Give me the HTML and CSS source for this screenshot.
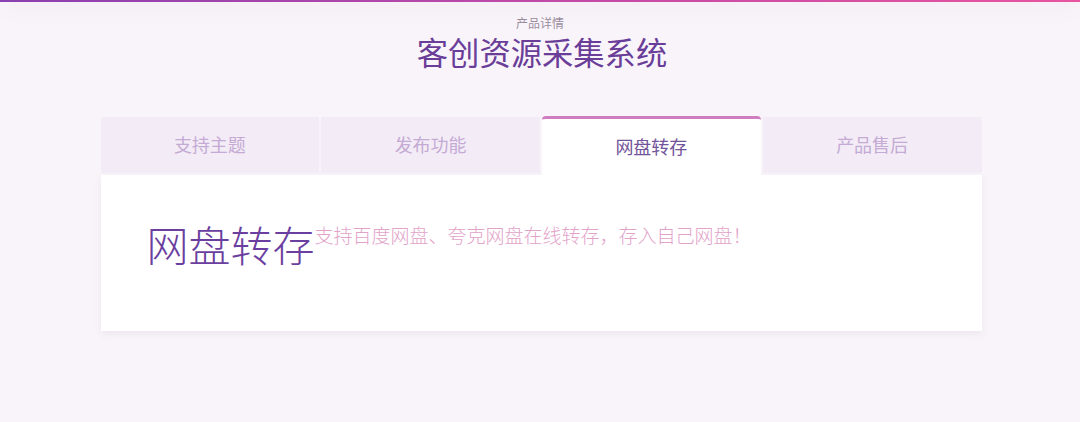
FILE: index.html
```html
<!DOCTYPE html>
<html lang="zh-CN">
<head>
<meta charset="utf-8">
<title>产品详情</title>
<link rel="stylesheet" href="styles.css">
</head>
<body>
<div class="topbar"></div>
<section class="detail">
  <div class="section-head">
    <div class="sub">产品详情</div>
    <h1 class="title">客创资源采集系统</h1>
  </div>
  <div class="tabs-wrap">
    <div class="tabs">
      <div class="tab">支持主题</div>
      <div class="tab">发布功能</div>
      <div class="tab active">网盘转存</div>
      <div class="tab">产品售后</div>
    </div>
    <div class="panel">
      <h2 class="panel-title">网盘转存</h2>
      <p class="panel-desc">支持百度网盘、夸克网盘在线转存，存入自己网盘！</p>
    </div>
  </div>
</section>
</body>
</html>
```

FILE: styles.css
```css
html, body {
  margin: 0;
  padding: 0;
}
body {
  background: #f9f4fa;
  font-family: "Noto Sans CJK SC", "Noto Sans", sans-serif;
  height: 422px;
  overflow: hidden;
}
.topbar {
  height: 2px;
  background: linear-gradient(90deg, #8a40b0 0%, #c14aa8 50%, #e854a0 100%);
  box-shadow: 0 3px 22px rgba(60, 20, 70, 0.18);
  position: relative;
  z-index: 2;
}
.detail {
  padding-top: 15px;
}
.section-head {
  text-align: center;
}
.sub {
  font-size: 12px;
  line-height: 12px;
  color: #9a8e9e;
}
.title {
  margin: 7px 0 0;
  font-size: 31.3px;
  line-height: 32px;
  font-weight: 400;
  color: #6a3d98;
  position: relative;
  left: 2px;
}
.tabs-wrap {
  width: 881px;
  margin: 48px auto 0;
  position: relative;
  left: 1px;
}
.tabs {
  display: grid;
  grid-template-columns: repeat(4, 1fr);
  gap: 2px;
  align-items: end;
}
.tab {
  height: 56px;
  box-sizing: border-box;
  padding-bottom: 3px;
  background: #f3ecf6;
  color: #c4aad4;
  font-size: 18px;
  display: flex;
  align-items: center;
  justify-content: center;
}
.tab.active {
  height: 59px;
  background: #ffffff;
  color: #72549a;
  border-top: 3px solid #d07dbf;
  border-radius: 4px 4px 0 0;
  margin-bottom: -2px;
  position: relative;
  z-index: 1;
}
.panel {
  margin-top: 2px;
  background: #ffffff;
  height: 156px;
  box-sizing: border-box;
  padding: 48px 46px 0;
  display: flex;
  align-items: flex-start;
  box-shadow: 0 3px 8px rgba(90, 40, 100, 0.07);
}
.panel-title {
  margin: 0;
  font-size: 42px;
  line-height: 42px;
  font-weight: 300;
  color: #6b3fa0;
  white-space: nowrap;
}
.panel-desc {
  margin: 2px 0 0;
  font-size: 19px;
  line-height: 19px;
  font-weight: 300;
  color: #e2a3c9;
  white-space: nowrap;
}
```
